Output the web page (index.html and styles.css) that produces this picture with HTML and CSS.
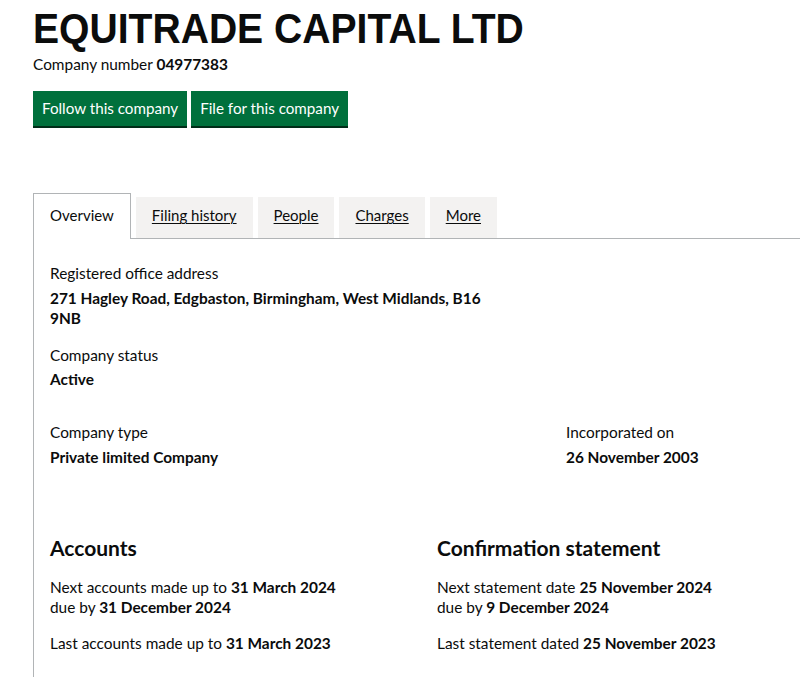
FILE: index.html
```html
<!DOCTYPE html>
<html lang="en">
<head>
<meta charset="utf-8">
<title>EQUITRADE CAPITAL LTD</title>
<link rel="stylesheet" href="styles.css">
</head>
<body>
<div class="page">
  <h1 class="title">EQUITRADE CAPITAL LTD</h1>
  <p class="company-number">Company number <strong>04977383</strong></p>
  <div class="actions">
    <a class="button" href="#">Follow this company</a>
    <a class="button" href="#">File for this company</a>
  </div>

  <ul class="tabs">
    <li class="tab tab-active">Overview</li>
    <li class="tab"><a href="#">Filing history</a></li>
    <li class="tab"><a href="#">People</a></li>
    <li class="tab"><a href="#">Charges</a></li>
    <li class="tab"><a href="#">More</a></li>
  </ul>

  <div class="panel">
    <dl class="field field-address">
      <dt>Registered office address</dt>
      <dd>271 Hagley Road, Edgbaston, Birmingham, West Midlands, B16 9NB</dd>
    </dl>
    <dl class="field field-status">
      <dt>Company status</dt>
      <dd>Active</dd>
    </dl>
    <div class="row-type">
      <dl class="field">
        <dt>Company type</dt>
        <dd>Private limited Company</dd>
      </dl>
      <dl class="field">
        <dt>Incorporated on</dt>
        <dd>26 November 2003</dd>
      </dl>
    </div>
    <div class="row-dates">
      <div class="col">
        <h2 class="heading">Accounts</h2>
        <p class="line">Next accounts made up to <strong>31 March 2024</strong><br>due by <strong>31 December 2024</strong></p>
        <p class="line">Last accounts made up to <strong>31 March 2023</strong></p>
      </div>
      <div class="col">
        <h2 class="heading">Confirmation statement</h2>
        <p class="line">Next statement date <strong>25 November 2024</strong><br>due by <strong>9 December 2024</strong></p>
        <p class="line">Last statement dated <strong>25 November 2023</strong></p>
      </div>
    </div>
  </div>
</div>
</body>
</html>
```
FILE: styles.css
```css
html, body {
  margin: 0;
  padding: 0;
  background: #ffffff;
}
body {
  font-family: "Lato", "Noto Sans", sans-serif;
  color: #0b0c0c;
  font-size: 15.4px;
  line-height: 20px;
}
.page {
  padding-left: 33px;
  overflow: hidden;
}
.title {
  font-family: "Liberation Sans", Arial, sans-serif;
  font-weight: 700;
  font-size: 43px;
  line-height: 43px;
  margin: 7px 0 0;
  transform: scaleX(0.909);
  transform-origin: left center;
  white-space: nowrap;
}
.company-number {
  margin: 4px 0 0;
  font-size: 15.4px;
}
.company-number strong {
  font-weight: 700;
}
.actions {
  display: flex;
  gap: 4px;
  margin-top: 17px;
}
.button {
  display: inline-block;
  background: #00703c;
  color: #ffffff;
  text-decoration: none;
  font-size: 15.2px;
  line-height: 19px;
  padding: 8px 9px;
  box-shadow: 0 2px 0 #002d18;
}
.tabs {
  list-style: none;
  margin: 67px -40px 0 0;
  padding: 0;
  display: flex;
  align-items: flex-end;
  gap: 5px;
  border-bottom: 1px solid #b1b4b6;
}
.tab {
  background: #f3f2f1;
  padding: 8px 16px 13px;
  line-height: 20px;
  font-size: 15px;
}
.tab a {
  color: #0b0c0c;
  text-decoration: underline;
  text-underline-offset: 2px;
  text-decoration-thickness: 1px;
}
.tab-active {
  background: #ffffff;
  border: 1px solid #b1b4b6;
  border-bottom: 0;
  padding: 11px 16px 14px;
  margin-bottom: -1px;
}
.panel {
  border-left: 1px solid #b1b4b6;
  padding: 24px 0 40px 16px;
}
.field {
  margin: 0;
}
.field dt {
  margin: 0;
}
.field dd {
  margin: 5px 0 0;
  font-weight: 700;
}
.field-address dd {
  max-width: 450px;
}
.field-status {
  margin-top: 17px;
}
.field-status dd {
  margin-top: 4px;
}
.row-type {
  display: grid;
  grid-template-columns: 516px 1fr;
  margin-top: 33px;
}
.row-dates {
  display: grid;
  grid-template-columns: 387px 1fr;
  margin-top: 69px;
}
.heading {
  font-size: 21px;
  line-height: 24px;
  font-weight: 700;
  margin: 0;
}
.line {
  margin: 17px 0 0;
}
.line + .line {
  margin-top: 16px;
}
.line strong {
  font-weight: 700;
}
```
